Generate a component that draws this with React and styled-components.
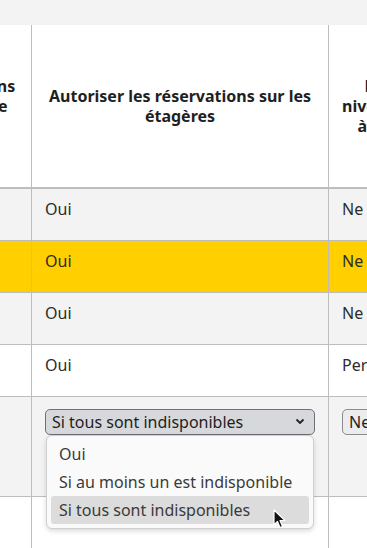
import React from "react";
import styled, { createGlobalStyle } from "styled-components";

const GlobalStyle = createGlobalStyle`
  html, body {
    margin: 0;
    padding: 0;
    background: #fff;
  }
  body {
    font-family: "Noto Sans", "Open Sans", sans-serif;
    color: #2b2b2b;
  }
`;

const Page = styled.div`
  width: 367px;
  height: 548px;
  overflow: hidden;
  background: #fff;
`;

const TopBand = styled.div`
  height: 25px;
  background: #f2f3f2;
`;

const Table = styled.table`
  border-collapse: collapse;
  table-layout: fixed;
  margin-left: -169px;
  width: 689px;
`;

const Col = styled.col`
  width: ${(p) => p.$w}px;
`;

const Th = styled.th`
  height: 162px;
  padding: 0 13px;
  border-left: 1px solid #bdbdbd;
  border-right: 1px solid #bdbdbd;
  border-bottom: 2px solid #bdbdbd;
  font-size: 16px;
  line-height: 20px;
  font-weight: 700;
  color: #1f1f1f;
  text-align: center;
  vertical-align: middle;
  white-space: nowrap;
`;

const Tr = styled.tr`
  background: ${(p) => p.$bg || "#fff"};
`;

const Td = styled.td`
  height: ${(p) => p.$h || 52}px;
  box-sizing: border-box;
  padding: 9px 13px 0;
  border: 1px solid #bdbdbd;
  font-size: 16px;
  line-height: 22px;
  vertical-align: top;
  white-space: nowrap;
  overflow: ${(p) => (p.$open ? "visible" : "hidden")};
  position: relative;
`;

const SelectBox = styled.div`
  display: flex;
  align-items: center;
  justify-content: space-between;
  box-sizing: border-box;
  height: 26px;
  width: ${(p) => (p.$w ? p.$w + "px" : "auto")};
  padding: 0 9px 0 6px;
  margin-top: 3px;
  border: 1px solid ${(p) => (p.$open ? "#6f7075" : "#8a8a8f")};
  border-radius: 5px;
  background: ${(p) => (p.$open ? "#d7d8dc" : "#ececef")};
  color: #1e1e1e;
  font-size: 16px;
`;

const Menu = styled.div`
  position: absolute;
  left: 14px;
  top: 38px;
  width: 268px;
  box-sizing: border-box;
  padding: 4px 4px;
  background: #fafafa;
  border: 1px solid #d0d0d0;
  border-radius: 6px;
  box-shadow: 0 2px 5px rgba(0, 0, 0, 0.15);
  z-index: 2;
`;

const Option = styled.div`
  height: 28px;
  line-height: 28px;
  padding: 0 8px;
  border-radius: 3px;
  font-size: 16px;
  color: #3a3a3a;
  background: ${(p) => (p.$active ? "#dcdcdc" : "transparent")};
`;

const Cursor = styled.svg`
  position: absolute;
  left: 241px;
  top: 112px;
  z-index: 3;
`;

const Chevron = () => (
  <svg width="10" height="7" viewBox="0 0 10 7">
    <path d="M1.5 1.5 L5 5 L8.5 1.5" fill="none" stroke="#222" strokeWidth="1.8" />
  </svg>
);

const rows = [
  { bg: "#f2f3f2", second: "Ne pas autoriser" },
  { bg: "#ffcf00", second: "Ne pas autoriser" },
  { bg: "#f2f3f2", second: "Ne pas autoriser" },
  { bg: "#fff", second: "Permettre" },
];

const App = () => {
  return (
    <Page>
      <GlobalStyle />
      <TopBand />
      <Table>
        <colgroup>
          <Col $w={200} />
          <Col $w={297} />
          <Col $w={192} />
        </colgroup>
        <thead>
          <tr>
            <Th>
              Nbre de réservations
              <br />
              autorisées en ligne
              <br />
              par notice
            </Th>
            <Th>
              Autoriser les réservations sur les
              <br />
              étagères
            </Th>
            <Th>
              Limiter la prise
              <br />
              niveau de l'exemplaire
              <br />
              à la bibliothèque
            </Th>
          </tr>
        </thead>
        <tbody>
          {rows.map((r, i) => (
            <Tr key={i} $bg={r.bg}>
              <Td>Illimité</Td>
              <Td>Oui</Td>
              <Td>{r.second}</Td>
            </Tr>
          ))}
          <Tr $bg="#f2f3f2">
            <Td $h={100} />
            <Td $h={100} $open>
              <SelectBox $open $w={270}>
                Si tous sont indisponibles
                <Chevron />
              </SelectBox>
              <Menu>
                <Option>Oui</Option>
                <Option>Si au moins un est indisponible</Option>
                <Option $active>Si tous sont indisponibles</Option>
              </Menu>
              <Cursor width="14" height="20" viewBox="0 0 14 20">
                <path
                  d="M1 1 L1 16 L4.5 12.5 L7 18.5 L9.5 17.5 L7 11.5 L12 11.5 Z"
                  fill="#111"
                  stroke="#fff"
                  strokeWidth="1.2"
                  strokeLinejoin="round"
                />
              </Cursor>
            </Td>
            <Td $h={100}>
              <SelectBox $w={180}>Ne pas autoriser</SelectBox>
            </Td>
          </Tr>
          <Tr>
            <Td $h={60} />
            <Td $h={60} />
            <Td $h={60} />
          </Tr>
        </tbody>
      </Table>
    </Page>
  );
};

export default App;
